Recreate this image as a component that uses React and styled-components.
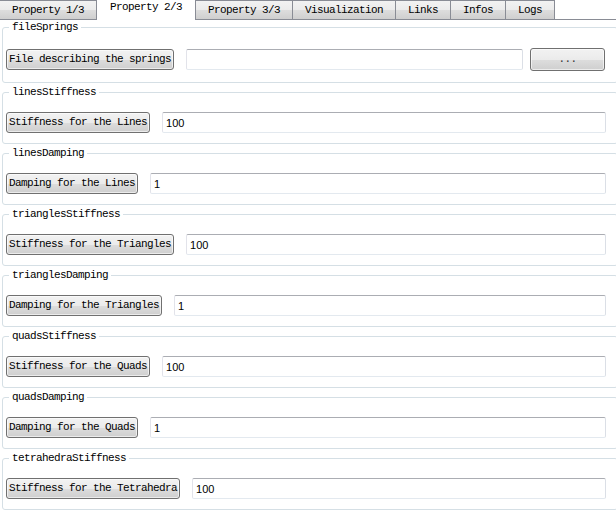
import React from 'react';
import styled, { createGlobalStyle } from 'styled-components';

const GlobalStyle = createGlobalStyle`
  html, body {
    margin: 0;
    padding: 0;
    background: #ffffff;
    overflow: hidden;
  }
  body {
    font-family: 'Liberation Mono', 'DejaVu Sans Mono', monospace;
    font-size: 11px;
    color: #000;
  }
`;

const mono = `
  font-family: 'Liberation Mono', 'DejaVu Sans Mono', monospace;
  font-size: 11px;
  letter-spacing: -0.6px;
`;

const tabs = ['Property 1/3', 'Property 2/3', 'Property 3/3', 'Visualization', 'Links', 'Infos', 'Logs'];

const fields = [
  { title: 'linesStiffness', label: 'Stiffness for the Lines', value: '100' },
  { title: 'linesDamping', label: 'Damping for the Lines', value: '1' },
  { title: 'trianglesStiffness', label: 'Stiffness for the Triangles', value: '100' },
  { title: 'trianglesDamping', label: 'Damping for the Triangles', value: '1' },
  { title: 'quadsStiffness', label: 'Stiffness for the Quads', value: '100' },
  { title: 'quadsDamping', label: 'Damping for the Quads', value: '1' },
  { title: 'tetrahedraStiffness', label: 'Stiffness for the Tetrahedra', value: '100' },
];

const App = () => {
  return (
    <>
      <GlobalStyle />
      <Window>
        <TabBar>
          {tabs.map((t, i) => (
            <Tab key={t} $active={i === 1}>{t}</Tab>
          ))}
        </TabBar>
        <Pane>
          <Group $first>
            <Legend>fileSprings</Legend>
            <Row>
              <LabelButton>File describing the springs</LabelButton>
              <Edit defaultValue="" />
              <BrowseButton>...</BrowseButton>
            </Row>
          </Group>
          {fields.map((f) => (
            <Group key={f.title}>
              <Legend>{f.title}</Legend>
              <Row>
                <LabelButton>{f.label}</LabelButton>
                <Edit defaultValue={f.value} />
              </Row>
            </Group>
          ))}
        </Pane>
      </Window>
    </>
  );
};

// tab widget

const Window = styled.div`
  width: 640px;
  height: 511px;
  overflow: hidden;
  background: #ffffff;
`;

const TabBar = styled.div`
  display: flex;
  align-items: flex-end;
  height: 19px;
  margin-top: -1px;
  padding-top: 1px;
  border-bottom: 1px solid #898c95;
`;

const Tab = styled.div`
  ${mono}
  position: relative;
  box-sizing: border-box;
  height: ${(p) => (p.$active ? '21px' : '19px')};
  margin-left: -1px;
  margin-bottom: ${(p) => (p.$active ? '-1px' : '0')};
  padding: ${(p) => (p.$active ? '1px 13px 0 13px' : '3px 12px 0 12px')};
  line-height: 13px;
  white-space: nowrap;
  border: 1px solid #898c95;
  border-bottom: 0;
  background: ${(p) =>
    p.$active
      ? '#ffffff'
      : 'linear-gradient(to bottom, #f2f2f2 0%, #ebebeb 50%, #dddddd 51%, #cfcfcf 100%)'};
  z-index: ${(p) => (p.$active ? 2 : 1)};

  &:first-child {
    margin-left: -1px;
  }
`;

const Pane = styled.div`
  padding-top: 1px;
  display: flex;
  flex-direction: column;
`;

// group boxes

const Group = styled.fieldset`
  box-sizing: border-box;
  width: 616px;
  margin: 0 0 3px 2px;
  padding: ${(p) => (p.$first ? '15px 11px 11px 3px' : '14px 11px 10px 3px')};
  border: 1px solid #d5dfe5;
  border-radius: 3px;
  min-width: 0;
`;

const Legend = styled.legend`
  ${mono}
  line-height: 12px;
  padding: 0 3px;
  margin-left: 3px;
`;

const Row = styled.div`
  display: flex;
  align-items: center;
  gap: 12px;
`;

const LabelButton = styled.button`
  ${mono}
  box-sizing: border-box;
  height: 21px;
  margin: 0;
  padding: 0 2px;
  line-height: 19px;
  color: #000;
  white-space: nowrap;
  border: 1px solid #707070;
  border-radius: 3px;
  background: linear-gradient(to bottom, #f2f2f2 0%, #ebebeb 50%, #dddddd 51%, #cfcfcf 100%);
  box-shadow: inset 0 0 0 1px rgba(255, 255, 255, 0.6);
`;

const Edit = styled.input`
  box-sizing: border-box;
  flex: 1;
  min-width: 0;
  height: 21px;
  margin: 0;
  padding: 0 3px;
  font-family: 'Liberation Sans', Arial, sans-serif;
  font-size: 11px;
  color: #000;
  background: #fff;
  border: 1px solid;
  border-color: #abadb3 #dbdfe6 #e3e9ef #e2e3ea;
  border-radius: 2px;
  outline: none;
`;

const BrowseButton = styled(LabelButton)`
  width: 75px;
  height: 23px;
  margin-left: -5px;
  margin-right: 1px;
  color: #333;
  text-align: center;
`;

export default App;
